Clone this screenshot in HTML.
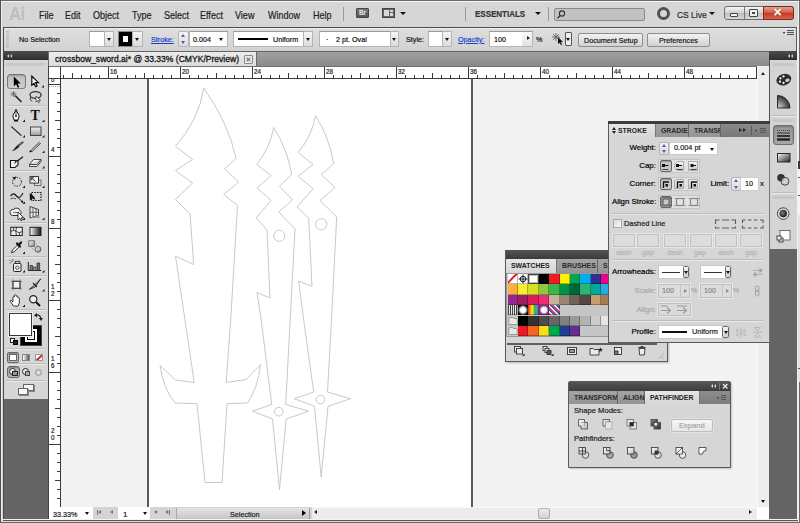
<!DOCTYPE html>
<html><head><meta charset="utf-8"><title>crossbow_sword.ai</title>
<style>
*{box-sizing:border-box;margin:0;padding:0}
html,body{width:800px;height:523px;overflow:hidden}
body{position:relative;background:#d6d6d6;font-family:"Liberation Sans","DejaVu Sans",sans-serif;font-size:8px;color:#1a1a1a;line-height:1}
.a{position:absolute}
.t{position:absolute;white-space:nowrap;transform-origin:0 50%;-webkit-text-stroke:.2px}
.menu .t{font-size:10.5px;top:8.500px;height:12px;line-height:12px;color:#222;transform:scaleX(.86)}
.ctl .t{font-size:8px;line-height:10px;height:10px;top:35px;color:#111;transform:scaleX(.9)}
.wf{position:absolute;background:#fff;border:1px solid #b4b4b4;border-top-color:#9a9a9a}
.dd{position:absolute;background:linear-gradient(#f4f4f4,#dcdcdc);border:1px solid #b4b4b4}
.ar{position:absolute;width:0;height:0;border-left:2.5px solid transparent;border-right:2.5px solid transparent;border-top:3px solid #111}
.arr{position:absolute;width:0;height:0;border-top:2.5px solid transparent;border-bottom:2.5px solid transparent;border-left:3px solid #222}
.arl{position:absolute;width:0;height:0;border-top:2.5px solid transparent;border-bottom:2.5px solid transparent;border-right:3px solid #222}
.ctl .link,.link{color:#1a3fd0;text-decoration:underline}
.btn{position:absolute;border:1px solid #8e8e8e;border-radius:2px;background:linear-gradient(#f2f2f2,#d2d2d2);text-align:center}
.hdr{position:absolute;background:linear-gradient(#4c4c4c,#2e2e2e)}
.grip{position:absolute;height:3px;background:repeating-linear-gradient(90deg,#c0c0c0 0 1px,#d0d0d0 1px 2px)}
.panel{position:absolute;background:#d6d6d6;border:1px solid #555}
.tabrow{position:absolute;left:0;right:0;background:linear-gradient(#8e8e8e,#7c7c7c)}
.tab{position:absolute;top:0;bottom:0;font-weight:bold;font-size:7.5px;color:#2a2a2a;border-right:1px solid #666;background:linear-gradient(#a4a4a4,#949494)}
.tab.on{background:linear-gradient(#e6e6e6,#d6d6d6);border-right:1px solid #777;color:#222}
.tab span{position:absolute;top:3px;white-space:nowrap;transform-origin:0 50%;transform:scaleX(.92)}
.pl{-webkit-text-stroke:.2px;position:absolute;font-size:8px;line-height:10px;white-space:nowrap;text-align:right;color:#000;transform-origin:100% 50%;transform:scaleX(.98)}
.dis{color:#a8a8a8}
.sep{position:absolute;height:2px;border-top:1px solid #bdbdbd;border-bottom:1px solid #e8e8e8}
</style></head><body>
<!-- window frame -->
<div class="a" style="left:0;top:0;width:800px;height:523px;border:1px solid #6a6a6a;border-left-color:#4e4e4e"></div>
<div class="a" style="left:1px;top:1px;width:798px;height:1px;background:#f4f4f4"></div>
<div class="a" style="left:1px;top:1px;width:1px;height:521px;background:#ededed"></div>
<div class="a" style="left:798px;top:1px;width:1px;height:521px;background:#f0f0f0"></div>

<!-- app bar -->
<div class="menu">
<div class="a" style="left:9px;top:5px;font-size:18px;line-height:18px;font-weight:bold;color:#bdbdbd;letter-spacing:-.5px;transform:scaleX(.92);transform-origin:0 0">Ai</div>
<div class="t" style="left:39px">File</div>
<div class="t" style="left:65px">Edit</div>
<div class="t" style="left:93px">Object</div>
<div class="t" style="left:132px">Type</div>
<div class="t" style="left:164px">Select</div>
<div class="t" style="left:200px">Effect</div>
<div class="t" style="left:235px">View</div>
<div class="t" style="left:268px">Window</div>
<div class="t" style="left:313px">Help</div>
</div>
<div class="a" style="left:343px;top:7px;width:1px;height:14px;background:#9a9a9a"></div>
<div class="a" style="left:356px;top:8px;width:13px;height:10px;background:linear-gradient(#7a7a7a,#555);border:1px solid #444;border-radius:1px;color:#e8e8e8;font-size:6.5px;line-height:8px;text-align:center;font-weight:bold">Br</div>
<div class="a" style="left:382px;top:8px;width:13px;height:10px;border:1px solid #444;background:#666"></div>
<div class="a" style="left:384px;top:10px;width:5px;height:6px;background:#d8d8d8"></div>
<div class="a" style="left:390px;top:10px;width:3px;height:2px;background:#d8d8d8"></div>
<div class="a" style="left:390px;top:13px;width:3px;height:3px;background:#d8d8d8"></div>
<div class="ar" style="left:400px;top:12px;border-left-width:3px;border-right-width:3px;border-top-width:3.500px"></div>
<div class="a" style="left:465px;top:7px;width:1px;height:14px;background:#9a9a9a"></div>
<div class="t" style="left:475px;top:8px;height:12px;line-height:12px;font-size:9.5px;font-weight:bold;color:#333;transform:scaleX(.84)">ESSENTIALS</div>
<div class="ar" style="left:535px;top:12px;border-left-width:3px;border-right-width:3px;border-top-width:3.500px"></div>
<div class="a" style="left:548px;top:7px;width:1px;height:14px;background:#9a9a9a"></div>
<div class="a" style="left:554px;top:8px;width:91px;height:13px;background:#c2c2c2;border:1px solid #8a8a8a;border-radius:2px"></div>
<svg class="a" style="left:556px;top:9px" width="11" height="11" viewBox="0 0 11 11"><circle cx="6" cy="4.5" r="2.6" fill="none" stroke="#333" stroke-width="1.1"/><path d="M4.2 6.4L1.5 9.2" stroke="#333" stroke-width="1.4"/></svg>
<div class="a" style="left:657px;top:7px;width:13px;height:13px;border-radius:50%;border:3px solid #505050"></div>
<div class="t" style="left:677px;top:8.500px;height:12px;line-height:12px;font-size:9px;color:#2a2a2a;transform:scaleX(.94)">CS Live</div>
<div class="ar" style="left:709px;top:12px;border-left-width:3px;border-right-width:3px;border-top-width:3.500px"></div>
<!-- window buttons -->
<div class="a" style="left:724px;top:6px;width:70px;height:14px;border:1px solid #6e6e6e;border-radius:3px;background:linear-gradient(#f6f6f6,#cfcfcf 50%,#bdbdbd 51%,#d8d8d8)"></div>
<div class="a" style="left:744px;top:7px;width:1px;height:12px;background:#777"></div>
<div class="a" style="left:763px;top:6px;width:31px;height:14px;border:1px solid #7a2a20;border-radius:0 3px 3px 0;background:linear-gradient(#e9a091,#d2553f 50%,#c03a22 51%,#d8654a)"></div>
<div class="a" style="left:730px;top:13px;width:8px;height:4px;border:1px solid #444;border-radius:1px;background:#f4f4f4"></div>
<div class="a" style="left:749px;top:9px;width:9px;height:8px;border:1px solid #444;border-radius:1px;background:#f0f0f0"></div>
<div class="a" style="left:752px;top:12px;width:3px;height:2px;border:1px solid #444"></div>
<div class="t" style="left:773px;top:6px;font-size:11px;line-height:13px;font-weight:bold;color:#fff;-webkit-text-stroke:.6px #fff;text-shadow:0 0 1.500px #500,0 0 1px #500">✕</div>

<!-- control bar -->
<div class="a" style="left:3px;top:27px;width:794px;height:25px;border:1px solid #4a4a4a;border-right-color:#5a5a5a;background:linear-gradient(#dedede,#d2d2d2)"></div>
<div class="a" style="left:4px;top:28px;width:792px;height:1px;background:#f0f0f0"></div>
<div class="a" style="left:6px;top:31px;width:3px;height:17px;background:repeating-linear-gradient(180deg,#bcbcbc 0 1px,#d2d2d2 1px 2px)"></div>
<div class="ctl">
<div class="t" style="left:19px">No Selection</div>
<div class="wf" style="left:89px;top:31px;width:16px;height:16px"></div>
<div class="dd" style="left:104px;top:31px;width:10px;height:16px"></div><div class="ar" style="left:107px;top:38px"></div>
<div class="a" style="left:118px;top:31px;width:15px;height:16px;background:#000;border:1px solid #888"></div>
<div class="a" style="left:123px;top:36px;width:5px;height:6px;background:#fff"></div>
<div class="dd" style="left:132px;top:31px;width:11px;height:16px"></div><div class="ar" style="left:135px;top:38px"></div>
<div class="t link" style="left:151px">Stroke:</div>
<div class="dd" style="left:178px;top:31px;width:11px;height:16px;border-radius:2px"></div>
<div class="a" style="left:181px;top:34px;border-left:2.5px solid transparent;border-right:2.5px solid transparent;border-bottom:3px solid #4a5fb0"></div>
<div class="a" style="left:181px;top:41px;border-left:2.5px solid transparent;border-right:2.5px solid transparent;border-top:3px solid #4a5fb0"></div>
<div class="wf" style="left:189px;top:31px;width:39px;height:16px"></div>
<div class="t" style="left:193px">0.004</div><div class="ar" style="left:219px;top:38px"></div>
<div class="wf" style="left:233px;top:31px;width:71px;height:16px"></div>
<div class="a" style="left:238px;top:38px;width:30px;height:2px;background:#000"></div>
<div class="t" style="left:273px">Uniform</div>
<div class="dd" style="left:303px;top:31px;width:10px;height:16px"></div><div class="ar" style="left:306px;top:38px"></div>
<div class="wf" style="left:319px;top:31px;width:72px;height:16px"></div>
<div class="t" style="left:326px">·</div>
<div class="t" style="left:336px">2 pt. Oval</div>
<div class="dd" style="left:390px;top:31px;width:9px;height:16px"></div><div class="ar" style="left:392px;top:38px"></div>
<div class="t" style="left:406px">Style:</div>
<div class="wf" style="left:428px;top:31px;width:15px;height:16px"></div>
<div class="dd" style="left:442px;top:31px;width:10px;height:16px"></div><div class="ar" style="left:445px;top:38px"></div>
<div class="t link" style="left:458px">Opacity:</div>
<div class="wf" style="left:489px;top:31px;width:44px;height:16px"></div>
<div class="t" style="left:494px">100</div>
<div class="a" style="left:522px;top:32px;width:10px;height:14px;background:linear-gradient(#fafafa,#e2e2e2)"></div>
<div class="arr" style="left:527px;top:36px"></div>
<div class="t" style="left:536px">%</div>
<svg class="a" style="left:551px;top:32px" width="14" height="14" viewBox="0 0 14 14"><g stroke="#555" stroke-width=".8"><path d="M5 1v8M1 5h8M2 2l6 6M8 2L2 8"/></g><path d="M7 5l5 5-2.2.2 1.2 2.6-1 .5-1.2-2.6L7 12z" fill="#111"/></svg>
<div class="a" style="left:565px;top:32px;width:7px;height:14px;border:1px solid #555;border-radius:1px;background:#eee"></div><div class="ar" style="left:566px;top:38px;border-left-width:2px;border-right-width:2px"></div>
<div class="btn" style="left:578px;top:33px;width:65px;height:14px"></div><div class="t" style="left:584px;top:35.500px">Document Setup</div>
<div class="btn" style="left:647px;top:33px;width:63px;height:14px"></div><div class="t" style="left:659px;top:35.500px">Preferences</div>
</div>
<div class="ar" style="left:783px;top:32px;border-left-width:1.5px;border-right-width:1.5px;border-top-width:2px"></div>
<div class="a" style="left:787px;top:30px;width:7px;height:5px;background:repeating-linear-gradient(180deg,#555 0 1px,#d6d6d6 1px 2px)"></div>

<!-- MAIN AREA -->
<div class="a" id="main" style="left:3px;top:51px;width:794px;height:469px;background:#646464;border-left:1px solid #4a4a4a"></div>
<!-- left toolbox -->
<div class="hdr" style="left:4px;top:51px;width:44px;height:9px"></div>
<div class="a" style="left:7px;top:54px;border-top:2px solid transparent;border-bottom:2px solid transparent;border-right:2.5px solid #d0d0d0"></div>
<div class="a" style="left:10px;top:54px;border-top:2px solid transparent;border-bottom:2px solid transparent;border-right:2.5px solid #d0d0d0"></div>
<div class="a" id="tb" style="left:4px;top:60px;width:44px;height:339px;background:#d6d6d6"></div>
<div class="grip" style="left:6px;top:63px;width:39px"></div>
<div class="a" style="left:7px;top:74px;width:19px;height:15px;border:1px solid #7a7a7a;border-radius:3px;background:linear-gradient(#bdbdbd,#cfcfcf);box-shadow:inset 0 1px 1px #999"></div>
<svg class="a" style="left:0;top:60px" width="50" height="340" viewBox="0 60 50 340">
<defs>
<linearGradient id="gH" x1="0" x2="1" y1="0" y2="0"><stop offset="0" stop-color="#fff"/><stop offset="1" stop-color="#111"/></linearGradient>
<linearGradient id="gV" x1="0" x2="0" y1="0" y2="1"><stop offset="0" stop-color="#f4f4f4"/><stop offset="1" stop-color="#9a9a9a"/></linearGradient>
<linearGradient id="gD" x1="0" x2="1" y1="0" y2="1"><stop offset="0" stop-color="#fff"/><stop offset="1" stop-color="#888"/></linearGradient>
</defs>
<g fill="#1a1a1a">
<!-- corner triangles -->
<path d="M24 87.500v-2.500l-2.500 2.500z" transform="translate(20 0)"/>
<path d="M25 122v-2.500l-2.500 2.500zM44.500 122v-2.500l-2.500 2.500zM25 137.500v-2.500l-2.500 2.500zM44.500 137.500v-2.500l-2.500 2.500zM44.500 153v-2.500l-2.500 2.500zM44.500 168.500v-2.500l-2.500 2.500zM25 188v-2.500l-2.500 2.500zM44.500 188v-2.500l-2.500 2.500zM25 204v-2.500l-2.500 2.500zM25 220v-2.500l-2.500 2.500zM44.500 220v-2.500l-2.500 2.500zM25 254v-2.500l-2.500 2.500zM25 272.500v-2.500l-2.500 2.500zM44.500 272.500v-2.500l-2.500 2.500zM44.500 291.500v-2.500l-2.500 2.500zM25 307v-2.500l-2.500 2.500z"/>
</g>
<!-- selection arrow -->
<path d="M13.800 76.500v9.800l2.300-2.100 1.700 3.500 1.500-.7-1.700-3.500h3.100z" fill="#000"/>
<!-- direct selection -->
<path d="M31.800 76v9.300l2.200-2 1.600 3.400 1.500-.7-1.600-3.400h3z" fill="#f0f0f0" stroke="#000" stroke-width="1.100"/>
<!-- magic wand -->
<path d="M15 95.500l6.500 6.500" stroke="#222" stroke-width="1.600"/>
<path d="M13.500 91v6M10.500 94h6M11.400 91.900l4.200 4.200M15.600 91.900l-4.200 4.200" stroke="#555" stroke-width=".7"/>
<!-- lasso -->
<ellipse cx="35.500" cy="95" rx="5.500" ry="3.400" fill="none" stroke="#333" stroke-width="1.300"/>
<path d="M31 97q-2 3 1 4.500" fill="none" stroke="#333" stroke-width="1"/>
<path d="M36 96v6l1.500-1.300 1 2 1-.5-1-2h2z" fill="#fff" stroke="#222" stroke-width=".7"/>
<!-- pen -->
<path d="M16 109.500l3.200 6.500-1.400 4h-3.600l-1.400-4z" fill="#fff" stroke="#111" stroke-width="1"/>
<path d="M16 110v5" stroke="#111" stroke-width=".8"/><circle cx="16" cy="116" r="1" fill="#111"/>
<rect x="14" y="120" width="4" height="1.500" fill="#111"/>
<!-- T -->
<text x="30.500" y="120.300" font-family="Liberation Serif,serif" font-weight="bold" font-size="14" fill="#111">T</text>
<!-- line -->
<path d="M11.400 126.700l10 9" stroke="#111" stroke-width="1.100"/>
<!-- rectangle -->
<rect x="30.500" y="127" width="10.500" height="8.500" fill="url(#gV)" stroke="#444" stroke-width="1"/>
<!-- brush -->
<path d="M22.700 142.300l-5.500 4.300" stroke="#555" stroke-width="2" stroke-linecap="round"/><path d="M18.200 145.200l1.200 1.500-2.400 2q-2.500 2.200-5.500 2.200q2.800-1.200 3.600-3.300z" fill="#222"/>
<!-- pencil -->
<path d="M39.300 142.500l-8 7.500-1.700 2 2.700-.8 8-7.600z" fill="#eee" stroke="#222" stroke-width=".9"/><path d="M29.500 152l2-.5-1.300-1.200z" fill="#111"/>
<!-- blob brush -->
<path d="M10.500 160.500h7.500v4.500l-3 2.500h-4.500z" fill="#f4f4f4" stroke="#111" stroke-width="1.100"/>
<path d="M23 156.800l-6 4.500" stroke="#222" stroke-width="1.400"/><path d="M17.500 160.500q-1 2.600-4 3.200q2-1.500 2-3.600z" fill="#222"/>
<!-- eraser -->
<path d="M33.500 159.500h7.500l-4 5h-7.500zM29.500 164.500v2h7.500l4-5v-2" fill="#f2f2f2" stroke="#333" stroke-width=".9" stroke-linejoin="round"/>
<!-- rotate -->
<circle cx="17" cy="181.800" r="4.400" fill="none" stroke="#222" stroke-width="1" stroke-dasharray="1.600 1.200"/>
<path d="M12.200 177.500l3.800-1-1 3.600z" fill="#111"/>
<!-- scale -->
<rect x="34.500" y="180" width="6.500" height="5.500" fill="#ddd" stroke="#555" stroke-width=".8"/>
<rect x="30" y="176.600" width="8.500" height="6.500" fill="#f6f6f6" stroke="#222" stroke-width=".9"/>
<path d="M31.500 178l4 3.500M31.300 177.800h2.500M31.300 177.800v2.500" stroke="#111" stroke-width=".9" fill="none"/>
<!-- width/warp -->
<path d="M10.500 196q3-4 6 0t6.500-3" fill="none" stroke="#333" stroke-width="1.300"/>
<path d="M10.500 199q3-2 5.500 0" fill="none" stroke="#555" stroke-width="1"/>
<path d="M14 193.500l8.500 8.500" stroke="#222" stroke-width="1"/><circle cx="22.300" cy="201.800" r="1.100" fill="#111"/>
<!-- free transform -->
<rect x="31.500" y="192.500" width="9.500" height="8" fill="none" stroke="#111" stroke-width="1.200" stroke-dasharray="1.500 1.200"/>
<path d="M29.800 193v7.500l2.300-2 3.200 1.200-1-3z" fill="#111"/>
<!-- shape builder -->
<path d="M10 212.500a3 2.800 0 0 1 3.500-3a3.500 2.800 0 0 1 6.500 1a2.800 2.800 0 0 1-1 5h-6.500a2.800 2.800 0 0 1-2.500-3z" fill="#f0f0f0" stroke="#333" stroke-width="1"/>
<path d="M13 212.500h6" stroke="#555" stroke-width=".8"/>
<path d="M18 212v8l2-1.700 1.200 2.500 1.200-.6-1.200-2.400h2.600z" fill="#fff" stroke="#111" stroke-width=".8"/>
<!-- perspective grid -->
<path d="M30 206.500l8.500 3v6l-8.500 2.500z" fill="#e8e8e8" stroke="#333" stroke-width=".9"/>
<path d="M33 207.500v9.600M36 208.600v7.600M30 212.300h8.500" stroke="#333" stroke-width=".7"/>
<path d="M38.500 215.500l-8.500 2.500h10z" fill="#999"/>
<!-- mesh -->
<rect x="10.800" y="227.300" width="11.500" height="8.200" fill="#eee" stroke="#222" stroke-width="1"/>
<path d="M10.800 231.500q3-2.500 5.700 0t5.800 0M16.500 227.300q-1.500 4 0 8.200M13.300 227.500q1 1.500 0 3M19.800 232q-1 2 0 3.500" fill="none" stroke="#222" stroke-width=".8"/>
<!-- gradient -->
<rect x="30" y="227.300" width="11" height="8.200" fill="url(#gH)" stroke="#222" stroke-width="1"/>
<!-- eyedropper -->
<path d="M11.300 252.800l1.200-2.800 5-5 1.800 1.800-5 5z" fill="#eee" stroke="#222" stroke-width=".9"/>
<path d="M17 243.500l3 3M18.600 245l2.400-2.600" stroke="#111" stroke-width="2.200" stroke-linecap="round"/>
<!-- blend -->
<rect x="28.800" y="240.800" width="5.500" height="5.500" fill="url(#gD)" stroke="#555" stroke-width=".8"/>
<circle cx="38" cy="249.300" r="2.900" fill="url(#gD)" stroke="#444" stroke-width=".8"/>
<path d="M33 245l3.500 3.500M35.500 243.500l3 3M31.500 247.500l3 3" stroke="#888" stroke-width=".6"/>
<!-- symbol sprayer -->
<rect x="13.500" y="263.500" width="7.500" height="8" rx="1" fill="#f0f0f0" stroke="#222" stroke-width="1"/>
<rect x="15.300" y="261.300" width="4.500" height="2.200" fill="#ccc" stroke="#222" stroke-width=".8"/>
<circle cx="17.300" cy="267.700" r="1.700" fill="none" stroke="#333" stroke-width=".8"/>
<path d="M9.500 260.500h1M11.500 261.500h1M9.800 262.800h1M12 260h1.500" stroke="#333" stroke-width=".9"/>
<!-- graph -->
<path d="M28.300 262v8.500h13" fill="none" stroke="#222" stroke-width="1"/>
<rect x="30" y="265.500" width="2.500" height="5" fill="#777" stroke="#222" stroke-width=".6"/><rect x="33.500" y="267" width="2.500" height="3.500" fill="#999" stroke="#222" stroke-width=".6"/><rect x="37" y="263" width="2.800" height="7.500" fill="#666" stroke="#222" stroke-width=".6"/>
<!-- artboard -->
<rect x="13" y="281.300" width="7" height="7" fill="#f4f4f4" stroke="#222" stroke-width="1"/>
<path d="M11 281.300h11M11 288.300h11M13 279.300v11M20 279.300v11" stroke="#555" stroke-width=".6"/>
<!-- slice -->
<path d="M40.800 278.800l-7 7-4.500 3.500 5.800-2.300z" fill="#ccc" stroke="#222" stroke-width=".9"/><path d="M33 283l4 4" stroke="#222" stroke-width="1.200"/>
<!-- hand -->
<path d="M13.500 306l-3-4.500q-.6-1.300.8-1.200l1.700 1.500v-5q.8-1.200 1.500 0v-1.500q.9-1.200 1.700 0v1q.9-1 1.600.2v1.300q.9-.8 1.500.3v5l-1.300 3z" fill="#fff" stroke="#222" stroke-width=".9" stroke-linejoin="round"/>
<!-- zoom -->
<circle cx="33.300" cy="299.300" r="3.600" fill="#eee" stroke="#222" stroke-width="1.200"/><path d="M36 302l4 4" stroke="#111" stroke-width="2"/>
</svg>

<div class="sep" style="left:6px;top:105px;width:40px"></div>
<div class="sep" style="left:6px;top:170px;width:40px"></div>
<div class="sep" style="left:6px;top:222px;width:40px"></div>
<div class="sep" style="left:6px;top:256px;width:40px"></div>
<div class="sep" style="left:6px;top:275px;width:40px"></div>
<div class="sep" style="left:6px;top:380px;width:40px"></div>
<!-- fill / stroke -->
<div class="sep" style="left:6px;top:309px;width:40px"></div>
<div class="sep" style="left:6px;top:348px;width:40px"></div>
<div class="sep" style="left:6px;top:363px;width:40px"></div>
<div class="a" style="left:20px;top:325px;width:22px;height:21px;background:#000;border:1px solid #444"></div>
<div class="a" style="left:25px;top:329px;width:12px;height:13px;background:#fff"></div>
<div class="a" style="left:27px;top:331px;width:8px;height:9px;background:#000"></div>
<div class="a" style="left:28px;top:332px;width:6px;height:7px;background:#ddd;border:1px solid #fff"></div>
<div class="a" style="left:9px;top:313px;width:23px;height:23px;background:#fff;border:1px solid #3a3a3a;box-shadow:0 0 0 1px #ececec"></div>
<div class="a" style="left:10px;top:338px;width:5px;height:5px;background:#fff;border:1px solid #222"></div>
<div class="a" style="left:13px;top:340px;width:5px;height:5px;background:#222;border:1px solid #000"></div>
<svg class="a" style="left:34px;top:313px" width="9" height="8" viewBox="0 0 9 8"><path d="M2 2Q6.500 1.500 7 6" fill="none" stroke="#222" stroke-width="1.200"/><path d="M0 2.200L3 0v4.500zM7 8L4.800 5h4.200z" fill="#222"/></svg>
<!-- color mode buttons -->
<div class="a" style="left:7px;top:352px;width:12px;height:11px;border:1px solid #666;border-radius:2px;background:#bdbdbd;box-shadow:inset 0 1px 1px #888"></div>
<div class="a" style="left:9px;top:354px;width:8px;height:7px;background:#fff;border:1px solid #666"></div>
<div class="a" style="left:22px;top:354px;width:8px;height:7px;background:linear-gradient(90deg,#fff,#555);border:1px solid #888"></div>
<div class="a" style="left:35px;top:354px;width:8px;height:7px;background:#fff;border:1px solid #999;overflow:hidden"><div class="a" style="left:-3px;top:2px;width:12px;height:1.600px;background:#e02020;transform:rotate(-42deg)"></div></div>
<!-- draw modes -->
<div class="a" style="left:7px;top:366px;width:13px;height:12px;border:1px solid #666;border-radius:3px;background:#b4b4b4;box-shadow:inset 0 1px 1px #888"></div>
<div class="a" style="left:9px;top:368px;width:7px;height:7px;border-radius:50%;border:1px solid #222;background:#eee"></div>
<div class="a" style="left:12px;top:371px;width:6px;height:5px;border:1px solid #222;background:#999"></div>
<div class="a" style="left:22px;top:368px;width:7px;height:7px;border-radius:50%;border:1px solid #222;background:#eee"></div>
<div class="a" style="left:25px;top:371px;width:5px;height:5px;border:1px solid #444;background:#aaa"></div>
<div class="a" style="left:35px;top:369px;width:7px;height:7px;border-radius:50%;border:1px solid #999;background:radial-gradient(#f4f4f4,#aaa)"></div>
<!-- screen mode -->
<div class="a" style="left:23px;top:384px;width:11px;height:7px;border:1px solid #666;background:#f6f6f6;box-shadow:1px 1px 0 #888"></div>
<div class="a" style="left:18px;top:388px;width:10px;height:7px;border:1px solid #666;background:#f6f6f6;box-shadow:1px 1px 0 #888"></div>
<div class="a" style="left:48px;top:52px;width:1px;height:467px;background:#444"></div>
<!-- document tab bar -->
<div class="a" style="left:48px;top:52px;width:721px;height:14px;background:linear-gradient(#a0a0a0,#8a8a8a)"></div>
<div class="a" style="left:48px;top:52px;width:209px;height:14px;background:linear-gradient(#ececec,#dcdcdc);border-left:1px solid #6a6a6a;border-right:1px solid #6a6a6a"></div>
<div class="t" style="left:55px;top:53px;height:12px;line-height:12px;font-size:9.5px;color:#111;-webkit-text-stroke:.3px #111;transform:scaleX(.9)">crossbow_sword.ai* @ 33.33% (CMYK/Preview)</div>
<div class="a" style="left:244px;top:55px;width:9px;height:9px;border:1px solid #8a8a8a;border-radius:1px;background:#e8e8e8;font-size:7px;line-height:7px;text-align:center;color:#444">✕</div>
<!-- canvas -->
<div class="a" style="left:49px;top:66px;width:720px;height:453px;background:#f3f3f3"></div>
<div class="a" style="left:149px;top:78px;width:322px;height:430px;background:#fff"></div>
<div class="a" style="left:147px;top:78px;width:2px;height:430px;background:#5a5a5a"></div>
<div class="a" style="left:471px;top:78px;width:2px;height:430px;background:#5a5a5a"></div>
<svg class="a" style="left:0;top:0" width="800" height="523" viewBox="0 0 800 523" fill="none" stroke="#c2c2c2" stroke-width="0.9" stroke-linejoin="miter">
<!-- sword 1 -->
<path d="M203.7 88 Q199 120 175.5 146.2 L192.5 159.5 L175.5 170.5 L192.5 183 L175.5 199.5 L190 213.8 L193.7 264.5 L175.5 256.2 L185 320 L194.2 382.5 L175.5 380 L160 365.5 Q163 388 175 403 L197 403.7 L205 482.5 L222 482.5 L227 403.7 L247.5 403 Q258 388 260.5 364.5 L246.2 379.5 L226.2 382.5 L230.7 320 L237.5 205.5 L223.7 194.5 L238.7 182 L224.5 168.7 L236.2 158.7 Q228 122 203.7 88Z"/>
<!-- sword 2 -->
<path d="M273.7 127.5 Q270 148 256.7 164.5 L271.2 175.7 L257 188 L271.2 200.3 L256.2 218 L267 230 L270 298 L257 292.5 L261.2 320 L271.7 404.5 L252.5 411.2 L272.5 419 L279.5 489.5 L286.2 419 L308.7 411.2 L285.7 404.5 L290.7 310 L295 228.7 L278.7 212 L292.5 200 L279.5 186.2 L291.7 174.5 Q287 148 273.7 127.5Z"/>
<circle cx="279.3" cy="235.8" r="5.6"/>
<circle cx="278.8" cy="411.7" r="4.3"/>
<!-- sword 3 -->
<path d="M315.5 115.8 Q312 136 298.2 152.5 L313 164.5 L298.2 176.2 L313 188.7 L297 207 L308.7 218 L312 286.2 L298.7 281.2 L303.7 320 L313.7 392 L294.2 398.7 L314.5 406.2 L321.2 477 L328 406.2 L350.5 398.7 L327.5 392 L332 310 L336.7 217 L320 200.5 L335 187.5 L321.2 174.5 L333.7 163.7 Q329 136 315.5 115.8Z"/>
<circle cx="321.3" cy="224.3" r="5.6"/>
<circle cx="320.5" cy="399.5" r="4.3"/>
</svg>

<!-- rulers -->
<div class="a" style="left:49px;top:66px;width:708px;height:13px;background:#fff;border-bottom:1px solid #3a3a3a"></div>
<div class="a" style="left:49px;top:79px;width:12px;height:428px;background:#fff;border-right:1px solid #3a3a3a"></div>
<div class="a" style="left:60px;top:66px;width:1px;height:13px;background:#3a3a3a"></div>
<div class="a" style="left:61px;top:75px;width:696px;height:3px;background:repeating-linear-gradient(90deg,transparent 0 2px,#3a3a3a 2px 3px,transparent 3px 9px)"></div>
<div class="a" style="left:57px;top:79px;width:3px;height:428px;background:repeating-linear-gradient(180deg,transparent 0 5px,#3a3a3a 5px 6px,transparent 6px 9px)"></div>
<div class="a" style="left:108px;top:66px;width:1px;height:12px;background:#3a3a3a"></div>
<div class="t" style="left:110px;top:67.5px;font-size:7px;line-height:8px;color:#222;transform:scaleX(.9)">16</div>
<div class="a" style="left:180px;top:66px;width:1px;height:12px;background:#3a3a3a"></div>
<div class="t" style="left:182px;top:67.5px;font-size:7px;line-height:8px;color:#222;transform:scaleX(.9)">20</div>
<div class="a" style="left:252px;top:66px;width:1px;height:12px;background:#3a3a3a"></div>
<div class="t" style="left:254px;top:67.5px;font-size:7px;line-height:8px;color:#222;transform:scaleX(.9)">24</div>
<div class="a" style="left:324px;top:66px;width:1px;height:12px;background:#3a3a3a"></div>
<div class="t" style="left:326px;top:67.5px;font-size:7px;line-height:8px;color:#222;transform:scaleX(.9)">28</div>
<div class="a" style="left:396px;top:66px;width:1px;height:12px;background:#3a3a3a"></div>
<div class="t" style="left:398px;top:67.5px;font-size:7px;line-height:8px;color:#222;transform:scaleX(.9)">32</div>
<div class="a" style="left:468px;top:66px;width:1px;height:12px;background:#3a3a3a"></div>
<div class="t" style="left:470px;top:67.5px;font-size:7px;line-height:8px;color:#222;transform:scaleX(.9)">36</div>
<div class="a" style="left:540px;top:66px;width:1px;height:12px;background:#3a3a3a"></div>
<div class="t" style="left:542px;top:67.5px;font-size:7px;line-height:8px;color:#222;transform:scaleX(.9)">40</div>
<div class="a" style="left:612px;top:66px;width:1px;height:12px;background:#3a3a3a"></div>
<div class="t" style="left:614px;top:67.5px;font-size:7px;line-height:8px;color:#222;transform:scaleX(.9)">44</div>
<div class="a" style="left:684px;top:66px;width:1px;height:12px;background:#3a3a3a"></div>
<div class="t" style="left:686px;top:67.5px;font-size:7px;line-height:8px;color:#222;transform:scaleX(.9)">48</div>
<div class="a" style="left:49px;top:84px;width:11px;height:1px;background:#3a3a3a"></div><div class="a" style="left:49px;top:86px;width:11px;height:1px;background:repeating-linear-gradient(90deg,#aaa 0 1px,#fff 1px 2px)"></div>
<div class="t" style="left:50.5px;top:75.500px;font-size:7px;line-height:8px;color:#222;transform:scaleX(.9)">0</div>
<div class="a" style="left:49px;top:156px;width:11px;height:1px;background:#3a3a3a"></div>
<div class="t" style="left:50.5px;top:146px;font-size:7px;line-height:8px;color:#222;transform:scaleX(.9)">4</div>
<div class="a" style="left:49px;top:228px;width:11px;height:1px;background:#3a3a3a"></div>
<div class="t" style="left:50.5px;top:218px;font-size:7px;line-height:8px;color:#222;transform:scaleX(.9)">8</div>
<div class="a" style="left:49px;top:300px;width:11px;height:1px;background:#3a3a3a"></div>
<div class="t" style="left:50.5px;top:283px;font-size:7px;line-height:8px;color:#222;transform:scaleX(.9)">1</div>
<div class="t" style="left:50.5px;top:290px;font-size:7px;line-height:8px;color:#222;transform:scaleX(.9)">2</div>
<div class="a" style="left:49px;top:372px;width:11px;height:1px;background:#3a3a3a"></div>
<div class="t" style="left:50.5px;top:355px;font-size:7px;line-height:8px;color:#222;transform:scaleX(.9)">1</div>
<div class="t" style="left:50.5px;top:362px;font-size:7px;line-height:8px;color:#222;transform:scaleX(.9)">6</div>
<div class="a" style="left:49px;top:444px;width:11px;height:1px;background:#3a3a3a"></div>
<div class="t" style="left:50.5px;top:427px;font-size:7px;line-height:8px;color:#222;transform:scaleX(.9)">2</div>
<div class="t" style="left:50.5px;top:434px;font-size:7px;line-height:8px;color:#222;transform:scaleX(.9)">0</div>
<div class="a" style="left:61px;top:73px;width:696px;height:5px;background:repeating-linear-gradient(90deg,transparent 0 11px,#3a3a3a 11px 12px,transparent 12px 72px)"></div>
<div class="a" style="left:55px;top:79px;width:5px;height:428px;background:repeating-linear-gradient(180deg,transparent 0 41px,#3a3a3a 41px 42px,transparent 42px 72px)"></div>
<div class="a" style="left:756px;top:66px;width:1px;height:13px;background:#3a3a3a"></div>
<div class="a" style="left:49px;top:66px;width:11px;height:12px;background:#fff"></div><div class="a" style="left:49px;top:78px;width:12px;height:1px;background:#3a3a3a"></div>
<div class="a" style="left:49px;top:66px;width:708px;height:1px;background:#707070"></div>
<!-- scrollbars -->
<div class="a" style="left:757px;top:66px;width:12px;height:441px;background:#ededed;border-left:1px solid #f8f8f8"></div>
<div class="a" style="left:761px;top:72px;border-left:2.5px solid transparent;border-right:2.5px solid transparent;border-bottom:3px solid #222"></div>
<div class="ar" style="left:761px;top:500px"></div>
<div class="a" style="left:757px;top:507px;width:12px;height:12px;background:#fff"></div>
<!-- status bar -->
<div class="a" style="left:49px;top:507px;width:708px;height:12px;background:#ececec;border-top:1px solid #f8f8f8"></div>
<div class="a" style="left:49px;top:507px;width:263px;height:12px;background:#d4d4d4"></div>
<div class="a" style="left:49px;top:507px;width:44px;height:12px;background:#fff"></div>
<div class="t" style="left:53px;top:509.500px;font-size:8px;line-height:10px;transform:scaleX(.9)">33.33%</div>
<div class="ar" style="left:85px;top:512px"></div>
<div class="a" style="left:118px;top:507px;width:32px;height:12px;background:#fff"></div>
<div class="t" style="left:123px;top:509.500px;font-size:8px;line-height:10px">1</div>
<div class="ar" style="left:143px;top:512px"></div>
<div class="a" style="left:97px;top:510px;width:1px;height:5px;background:#777"></div><div class="arl" style="left:98px;top:510px;border-right-color:#777"></div>
<div class="arl" style="left:110px;top:510px;border-right-color:#777"></div>
<div class="arr" style="left:155px;top:510px;border-left-color:#777"></div>
<div class="arr" style="left:166px;top:510px;border-left-color:#777"></div><div class="a" style="left:169px;top:510px;width:1px;height:5px;background:#777"></div>
<div class="a" style="left:176px;top:508px;width:134px;height:11px;background:linear-gradient(#e4e4e4,#c6c6c6);border-left:1px solid #aaa;border-right:1px solid #999"></div>
<div class="t" style="left:230px;top:509.500px;font-size:8px;line-height:10px;transform:scaleX(.9)">Selection</div>
<div class="arr" style="left:302px;top:510px;border-left-width:4px;border-top-width:3px;border-bottom-width:3px;border-left-color:#000"></div>
<div class="arl" style="left:314px;top:510px"></div>
<div class="arr" style="left:749px;top:510px"></div>
<div class="a" style="left:538px;top:508px;width:12px;height:11px;border:1px solid #b0b0b0;border-radius:2px;background:linear-gradient(#ececec,#d2d2d2)"></div>

<!-- right dock -->
<div class="hdr" style="left:769px;top:51px;width:28px;height:9px"></div>
<div class="a" style="left:788px;top:54px;border-top:2px solid transparent;border-bottom:2px solid transparent;border-right:2.5px solid #d0d0d0"></div>
<div class="a" style="left:791px;top:54px;border-top:2px solid transparent;border-bottom:2px solid transparent;border-right:2.5px solid #d0d0d0"></div>
<div class="a" style="left:769px;top:60px;width:28px;height:189px;background:#d4d4d4;border-left:1px solid #505050"></div>
<div class="grip" style="left:773px;top:63px;width:21px"></div>
<div class="sep" style="left:771px;top:115px;width:25px"></div>
<div class="grip" style="left:773px;top:119px;width:21px"></div>
<div class="sep" style="left:771px;top:192px;width:25px"></div>
<div class="grip" style="left:773px;top:196px;width:21px"></div>
<div class="a" style="left:773px;top:125px;width:21px;height:20px;border:1px solid #6e6e6e;border-radius:3px;background:linear-gradient(#989898,#a8a8a8);box-shadow:inset 0 1px 2px #777"></div>
<svg class="a" style="left:770px;top:60px" width="28" height="190" viewBox="770 60 28 190">
<defs>
<linearGradient id="dg1" x1="0" x2="1" y1="0" y2="1"><stop offset="0" stop-color="#fff"/><stop offset="1" stop-color="#222"/></linearGradient>
<radialGradient id="dg2" cx=".4" cy=".4" r=".6"><stop offset="0" stop-color="#777"/><stop offset="1" stop-color="#222"/></radialGradient>
<radialGradient id="dg3" cx="0" cy="1" r="1"><stop offset="0" stop-color="#ddd"/><stop offset="1" stop-color="#333"/></radialGradient>
</defs>
<!-- palette -->
<g transform="rotate(-18 783.300 79.500)"><ellipse cx="783.800" cy="79.800" rx="7.600" ry="5.600" fill="#2a2a2a"/><ellipse cx="787" cy="81.500" rx="2.200" ry="1.500" fill="#d4d4d4"/>
<circle cx="779.500" cy="80.500" r="1.100" fill="#fff"/><circle cx="781" cy="77.500" r="1.100" fill="#fff"/><circle cx="784.500" cy="76.600" r="1.100" fill="#fff"/><circle cx="782.500" cy="82.800" r="1.100" fill="#fff"/></g>
<!-- color guide -->
<path d="M777.500 95.500v12.500h12.500a12.500 12.500 0 0 0-12.500-12.500z" fill="url(#dg3)" stroke="#2a2a2a" stroke-width="1"/>
<!-- stroke icon -->
<path d="M777 130.500h13" stroke="#444" stroke-width="1" stroke-dasharray="1 1"/>
<path d="M777 133h13" stroke="#333" stroke-width="1"/>
<path d="M777 136h13" stroke="#2a2a2a" stroke-width="1.800"/>
<path d="M777 139.500h13" stroke="#222" stroke-width="2.400"/>
<!-- gradient -->
<rect x="777.500" y="153.500" width="12.500" height="8.500" fill="url(#dg1)" stroke="#2a2a2a" stroke-width="1"/>
<!-- transparency -->
<circle cx="781" cy="177.700" r="3.800" fill="#333"/>
<circle cx="785" cy="181.300" r="3.900" fill="#d0d0d0" fill-opacity=".75" stroke="#333" stroke-width=".9"/>
<!-- appearance -->
<circle cx="783.200" cy="213.600" r="5.800" fill="#e4e4e4" stroke="#444" stroke-width="1"/>
<circle cx="783.200" cy="213.600" r="3.800" fill="url(#dg2)"/>
<!-- graphic styles -->
<rect x="780" y="230.500" width="10" height="9.500" fill="#fafafa" stroke="#555" stroke-width=".8"/>
<rect x="779" y="238" width="4" height="4" fill="#eee" stroke="#222" stroke-width=".8"/>
<rect x="777" y="236" width="4" height="4" fill="#eee" stroke="#222" stroke-width=".8"/>
</svg>
<div class="a" style="left:797px;top:161px;width:3px;height:8px;background:#3a3a3a"></div>
<div class="a" style="left:797px;top:169px;width:3px;height:46px;background:#f4f4f4"></div>
<div class="a" style="left:797px;top:215px;width:3px;height:167px;background:#e2e2e2"></div><div class="a" style="left:797px;top:177px;width:3px;height:1px;background:#555"></div><div class="a" style="left:797px;top:195px;width:3px;height:1px;background:#555"></div><div class="a" style="left:797px;top:368px;width:3px;height:1px;background:#555"></div>


<!-- SWATCHES panel -->
<div class="a" style="left:505px;top:250px;width:163px;height:112px;background:#d6d6d6;border:1px solid #5a5a5a;box-shadow:1px 1px 2px rgba(0,0,0,.25)"></div>
<div class="hdr" style="left:506px;top:250px;width:161px;height:9px;background:linear-gradient(#555,#3a3a3a)"></div>
<div class="a" style="left:506px;top:259px;width:161px;height:14px;background:linear-gradient(#8e8e8e,#7c7c7c)">
 <div class="tab on" style="left:0;width:51px"><span style="left:5px">SWATCHES</span></div>
 <div class="tab" style="left:51px;width:41px"><span style="left:5px">BRUSHES</span></div>
 <div class="tab" style="left:92px;width:30px"><span style="left:5px">SYMBOLS</span></div>
</div>
<div class="a" style="left:506px;top:273px;width:161px;height:64px;background:#c6c6c6;border:1px solid #999"></div>
<div class="a" style="left:507.6px;top:273.9px;width:10.4px;height:10.4px;background:#fff;overflow:hidden;box-shadow:inset -1px -1px 0 rgba(0,0,0,.28);"><div class="a" style="left:-3px;top:3.600px;width:15px;height:1.600px;background:#e02020;transform:rotate(-45deg)"></div></div>
<div class="a" style="left:518.0px;top:273.9px;width:10.4px;height:10.4px;background:#fff;box-shadow:inset -1px -1px 0 rgba(0,0,0,.28);"></div><svg class="a" style="left:518.0px;top:273.9px" width="10" height="10" viewBox="0 0 10 10"><circle cx="5" cy="5" r="2.800" fill="none" stroke="#111" stroke-width="1"/><path d="M5 .5v9M.5 5h9" stroke="#111" stroke-width=".9"/></svg>
<div class="a" style="left:528.4px;top:273.9px;width:10.4px;height:10.4px;background:#fff;border:1px solid #444;box-shadow:inset 0 0 0 1px #bbb"></div>
<div class="a" style="left:538.8px;top:273.9px;width:10.4px;height:10.4px;background:#000000;box-shadow:inset -1px -1px 0 rgba(0,0,0,.28);"></div>
<div class="a" style="left:549.2px;top:273.9px;width:10.4px;height:10.4px;background:#ed1c24;box-shadow:inset -1px -1px 0 rgba(0,0,0,.28);"></div>
<div class="a" style="left:559.6px;top:273.9px;width:10.4px;height:10.4px;background:#fff200;box-shadow:inset -1px -1px 0 rgba(0,0,0,.28);"></div>
<div class="a" style="left:570.0px;top:273.9px;width:10.4px;height:10.4px;background:#00a651;box-shadow:inset -1px -1px 0 rgba(0,0,0,.28);"></div>
<div class="a" style="left:580.4px;top:273.9px;width:10.4px;height:10.4px;background:#00aeef;box-shadow:inset -1px -1px 0 rgba(0,0,0,.28);"></div>
<div class="a" style="left:590.8px;top:273.9px;width:10.4px;height:10.4px;background:#2e3192;box-shadow:inset -1px -1px 0 rgba(0,0,0,.28);"></div>
<div class="a" style="left:601.2px;top:273.9px;width:10.4px;height:10.4px;background:#ec008c;box-shadow:inset -1px -1px 0 rgba(0,0,0,.28);"></div>
<div class="a" style="left:507.6px;top:284.3px;width:10.4px;height:10.4px;background:#fbb040;box-shadow:inset -1px -1px 0 rgba(0,0,0,.28);"></div>
<div class="a" style="left:518.0px;top:284.3px;width:10.4px;height:10.4px;background:#f9ed32;box-shadow:inset -1px -1px 0 rgba(0,0,0,.28);"></div>
<div class="a" style="left:528.4px;top:284.3px;width:10.4px;height:10.4px;background:#d7df23;box-shadow:inset -1px -1px 0 rgba(0,0,0,.28);"></div>
<div class="a" style="left:538.8px;top:284.3px;width:10.4px;height:10.4px;background:#8dc63f;box-shadow:inset -1px -1px 0 rgba(0,0,0,.28);"></div>
<div class="a" style="left:549.2px;top:284.3px;width:10.4px;height:10.4px;background:#39b54a;box-shadow:inset -1px -1px 0 rgba(0,0,0,.28);"></div>
<div class="a" style="left:559.6px;top:284.3px;width:10.4px;height:10.4px;background:#009444;box-shadow:inset -1px -1px 0 rgba(0,0,0,.28);"></div>
<div class="a" style="left:570.0px;top:284.3px;width:10.4px;height:10.4px;background:#006838;box-shadow:inset -1px -1px 0 rgba(0,0,0,.28);"></div>
<div class="a" style="left:580.4px;top:284.3px;width:10.4px;height:10.4px;background:#2bb673;box-shadow:inset -1px -1px 0 rgba(0,0,0,.28);"></div>
<div class="a" style="left:590.8px;top:284.3px;width:10.4px;height:10.4px;background:#00a79d;box-shadow:inset -1px -1px 0 rgba(0,0,0,.28);"></div>
<div class="a" style="left:601.2px;top:284.3px;width:10.4px;height:10.4px;background:#27aae1;box-shadow:inset -1px -1px 0 rgba(0,0,0,.28);"></div>
<div class="a" style="left:507.6px;top:294.7px;width:10.4px;height:10.4px;background:#92278f;box-shadow:inset -1px -1px 0 rgba(0,0,0,.28);"></div>
<div class="a" style="left:518.0px;top:294.7px;width:10.4px;height:10.4px;background:#9e1f63;box-shadow:inset -1px -1px 0 rgba(0,0,0,.28);"></div>
<div class="a" style="left:528.4px;top:294.7px;width:10.4px;height:10.4px;background:#da1c5c;box-shadow:inset -1px -1px 0 rgba(0,0,0,.28);"></div>
<div class="a" style="left:538.8px;top:294.7px;width:10.4px;height:10.4px;background:#ee2a7b;box-shadow:inset -1px -1px 0 rgba(0,0,0,.28);"></div>
<div class="a" style="left:549.2px;top:294.7px;width:10.4px;height:10.4px;background:#c7b299;box-shadow:inset -1px -1px 0 rgba(0,0,0,.28);"></div>
<div class="a" style="left:559.6px;top:294.7px;width:10.4px;height:10.4px;background:#998675;box-shadow:inset -1px -1px 0 rgba(0,0,0,.28);"></div>
<div class="a" style="left:570.0px;top:294.7px;width:10.4px;height:10.4px;background:#736357;box-shadow:inset -1px -1px 0 rgba(0,0,0,.28);"></div>
<div class="a" style="left:580.4px;top:294.7px;width:10.4px;height:10.4px;background:#534741;box-shadow:inset -1px -1px 0 rgba(0,0,0,.28);"></div>
<div class="a" style="left:590.8px;top:294.7px;width:10.4px;height:10.4px;background:#c69c6d;box-shadow:inset -1px -1px 0 rgba(0,0,0,.28);"></div>
<div class="a" style="left:601.2px;top:294.7px;width:10.4px;height:10.4px;background:#a67c52;box-shadow:inset -1px -1px 0 rgba(0,0,0,.28);"></div>
<div class="a" style="left:507.6px;top:305.1px;width:10.4px;height:10.4px;background:repeating-linear-gradient(90deg,#444 0 1px,#e4e4e4 1px 2px);box-shadow:inset -1px -1px 0 rgba(0,0,0,.28);"></div>
<div class="a" style="left:518.0px;top:305.1px;width:10.4px;height:10.4px;background:radial-gradient(#fff 35%,#000 75%)"></div>
<div class="a" style="left:528.4px;top:305.1px;width:10.4px;height:10.4px;background:linear-gradient(90deg,#e31b23,#f7941d,#fff200,#39b54a,#27aae1,#e31b23);box-shadow:inset -1px -1px 0 rgba(0,0,0,.28);"></div>
<div class="a" style="left:538.8px;top:305.1px;width:10.4px;height:10.4px;background:radial-gradient(#fff 35%,#7b2d90 65%);box-shadow:inset -1px -1px 0 rgba(0,0,0,.28);"></div>
<div class="a" style="left:549.2px;top:305.1px;width:10.4px;height:10.4px;background:repeating-linear-gradient(45deg,#e8465a 0 1.500px,#f4e4ee 1.500px 3px,#3f55b5 3px 4.500px);box-shadow:inset -1px -1px 0 rgba(0,0,0,.28);"></div>
<svg class="a" style="left:507.6px;top:315.5px" width="10" height="10" viewBox="0 0 10 10"><path d="M.8 3q0-1.500 1.500-1.500h2l1 1h3q1 0 1 1v5h-8.500z" fill="#e8e8e8" stroke="#888" stroke-width=".8"/></svg>
<div class="a" style="left:518.0px;top:315.5px;width:10.4px;height:10.4px;background:#000000;box-shadow:inset -1px -1px 0 rgba(0,0,0,.28);"></div>
<div class="a" style="left:528.4px;top:315.5px;width:10.4px;height:10.4px;background:#333333;box-shadow:inset -1px -1px 0 rgba(0,0,0,.28);"></div>
<div class="a" style="left:538.8px;top:315.5px;width:10.4px;height:10.4px;background:#4d4d4d;box-shadow:inset -1px -1px 0 rgba(0,0,0,.28);"></div>
<div class="a" style="left:549.2px;top:315.5px;width:10.4px;height:10.4px;background:#666666;box-shadow:inset -1px -1px 0 rgba(0,0,0,.28);"></div>
<div class="a" style="left:559.6px;top:315.5px;width:10.4px;height:10.4px;background:#808080;box-shadow:inset -1px -1px 0 rgba(0,0,0,.28);"></div>
<div class="a" style="left:570.0px;top:315.5px;width:10.4px;height:10.4px;background:#999999;box-shadow:inset -1px -1px 0 rgba(0,0,0,.28);"></div>
<div class="a" style="left:580.4px;top:315.5px;width:10.4px;height:10.4px;background:#b3b3b3;box-shadow:inset -1px -1px 0 rgba(0,0,0,.28);"></div>
<div class="a" style="left:590.8px;top:315.5px;width:10.4px;height:10.4px;background:#cccccc;box-shadow:inset -1px -1px 0 rgba(0,0,0,.28);"></div>
<div class="a" style="left:601.2px;top:315.5px;width:10.4px;height:10.4px;background:#e6e6e6;box-shadow:inset -1px -1px 0 rgba(0,0,0,.28);"></div>
<svg class="a" style="left:507.6px;top:325.9px" width="10" height="10" viewBox="0 0 10 10"><path d="M.8 3q0-1.500 1.500-1.500h2l1 1h3q1 0 1 1v5h-8.500z" fill="#e8e8e8" stroke="#888" stroke-width=".8"/></svg>
<div class="a" style="left:518.0px;top:325.9px;width:10.4px;height:10.4px;background:#ed1c24;box-shadow:inset -1px -1px 0 rgba(0,0,0,.28);"></div>
<div class="a" style="left:528.4px;top:325.9px;width:10.4px;height:10.4px;background:#f26522;box-shadow:inset -1px -1px 0 rgba(0,0,0,.28);"></div>
<div class="a" style="left:538.8px;top:325.9px;width:10.4px;height:10.4px;background:#ffde17;box-shadow:inset -1px -1px 0 rgba(0,0,0,.28);"></div>
<div class="a" style="left:549.2px;top:325.9px;width:10.4px;height:10.4px;background:#00a651;box-shadow:inset -1px -1px 0 rgba(0,0,0,.28);"></div>
<div class="a" style="left:559.6px;top:325.9px;width:10.4px;height:10.4px;background:#1c3f94;box-shadow:inset -1px -1px 0 rgba(0,0,0,.28);"></div>
<div class="a" style="left:570.0px;top:325.9px;width:10.4px;height:10.4px;background:#662d91;box-shadow:inset -1px -1px 0 rgba(0,0,0,.28);"></div>
<div class="a" style="left:507px;top:343px;width:150px;height:1.500px;background:#5e5e5e"></div>
<svg class="a" style="left:506px;top:344px" width="161" height="16" viewBox="506 344 161 16">
<g fill="#ececec" stroke="#333" stroke-width=".9">
<rect x="514.500" y="346.500" width="6" height="5.500"/><rect x="516.500" y="348.500" width="6" height="5.500"/>
<rect x="543" y="346.500" width="4" height="4"/><rect x="545" y="348.500" width="4" height="4"/><rect x="547" y="350.500" width="4" height="4" fill="#555"/>
<rect x="567.500" y="347.500" width="9" height="7"/><rect x="569.500" y="349.500" width="5" height="3" fill="#999"/>
<path d="M590 348.500h3l1 1h5v5.500h-9z"/>
<rect x="614.500" y="347.500" width="7" height="7"/><rect x="614.500" y="351" width="3.500" height="3.500" fill="#777"/>
<path d="M639 348.500h6l-.7 6.500h-4.600zM638.300 347.500h7.400M640.500 346.500h3"/>
</g>
<g fill="#222"><path d="M524.500 356v-2.500l-2.500 2.500zM553.500 356v-2.500l-2.500 2.500zM600.500 347.500l.8 1.500 1.500.3-1.200 1 .4 1.500-1.500-.8-1.500.8.400-1.500-1.200-1 1.500-.3z"/></g>
<path d="M664 353l-6 6M664 355.500l-3.500 3.500M664 358l-1 1" stroke="#aaa" stroke-width=".8"/>
</svg>
<!-- STROKE panel -->
<div class="a" style="left:608px;top:121px;width:162px;height:222px;background:#d6d6d6;border:1px solid #5a5a5a;border-right-color:#777"></div>
<div class="hdr" style="left:608px;top:121px;width:162px;height:3px;background:#3c3c3c"></div>
<div class="a" style="left:609px;top:124px;width:160px;height:13px;background:linear-gradient(#8a8a8a,#787878)">
 <div class="tab on" style="left:0;width:47px"><span style="left:9px">STROKE</span></div>
 <div class="tab" style="left:47px;width:33px;overflow:hidden"><span style="left:5px">GRADIENT</span></div>
 <div class="tab" style="left:80px;width:32px;overflow:hidden"><span style="left:5px">TRANSPARENCY</span></div>
</div>
<div class="a" style="left:611.500px;top:126.500px;border-left:2.200px solid transparent;border-right:2.200px solid transparent;border-bottom:3px solid #222"></div>
<div class="a" style="left:611.500px;top:131px;border-left:2.200px solid transparent;border-right:2.200px solid transparent;border-top:3px solid #222"></div>
<div class="arr" style="left:739px;top:128px;border-left-color:#222"></div><div class="arr" style="left:742.500px;top:128px;border-left-color:#222"></div>
<div class="a" style="left:751px;top:126px;width:1px;height:9px;background:#5a5a5a"></div>
<div class="ar" style="left:755px;top:130px;border-left-width:1.800px;border-right-width:1.800px;border-top-width:2.500px;border-top-color:#333"></div>
<div class="a" style="left:760px;top:128px;width:6px;height:5px;background:repeating-linear-gradient(180deg,#555 0 1px,transparent 1px 2px)"></div>
<!-- weight -->
<div class="pl" style="right:144px;top:143px">Weight:</div>
<div class="dd" style="left:659px;top:142px;width:10px;height:13px;border-radius:2px"></div>
<div class="a" style="left:661.500px;top:144px;border-left:2.500px solid transparent;border-right:2.500px solid transparent;border-bottom:3px solid #4a5fb0"></div>
<div class="a" style="left:661.500px;top:150px;border-left:2.500px solid transparent;border-right:2.500px solid transparent;border-top:3px solid #4a5fb0"></div>
<div class="wf" style="left:669px;top:142px;width:49px;height:13px;border-color:#ccc"></div>
<div class="t" style="left:674px;top:143px;font-size:8px;line-height:10px;transform:scaleX(.92)">0.004 pt</div>
<div class="ar" style="left:710px;top:148px"></div>
<!-- cap -->
<div class="pl" style="right:144px;top:161px">Cap:</div>
<div class="a" style="left:658px;top:159px;width:42px;height:14px;background:#e2e2e2;border:1px solid #c4c4c4"></div>
<div class="a" style="left:660px;top:160px;width:12px;height:12px;border:1px solid #666;border-radius:2px;background:#c8c8c8;box-shadow:inset 0 1px 1px #999"></div>
<div class="a" style="left:674px;top:161px;width:10px;height:10px;border-radius:5px 0 0 5px;background:linear-gradient(#f4f4f4,#ccc);border:1px solid #aaa"></div>
<div class="a" style="left:688px;top:161px;width:10px;height:10px;background:linear-gradient(#f4f4f4,#ccc);border:1px solid #aaa"></div>
<svg class="a" style="left:658px;top:159px" width="42" height="14" viewBox="0 0 42 14"><g stroke="#111" stroke-width="1.200"><path d="M5.500 6.500h5M19 6.500h5M33 6.500h5"/></g><g fill="#111"><rect x="4" y="5" width="3" height="3"/><rect x="18" y="5" width="3" height="3"/><rect x="32.500" y="5" width="3" height="3"/></g><path d="M4.500 10.500h6M18.500 10.500h6M32.500 10.500h6" stroke="#444" stroke-width="1"/></svg>
<!-- corner -->
<div class="pl" style="right:144px;top:179px">Corner:</div>
<div class="a" style="left:658px;top:177px;width:42px;height:14px;background:#e2e2e2;border:1px solid #c4c4c4"></div>
<div class="a" style="left:660px;top:178px;width:12px;height:12px;border:1px solid #666;border-radius:2px;background:#c8c8c8;box-shadow:inset 0 1px 1px #999"></div>
<div class="a" style="left:674px;top:179px;width:10px;height:10px;background:linear-gradient(#f4f4f4,#ccc);border:1px solid #aaa;border-radius:3px 0 0 0"></div>
<div class="a" style="left:688px;top:179px;width:10px;height:10px;background:linear-gradient(#f4f4f4,#ccc);border:1px solid #aaa"></div>
<svg class="a" style="left:658px;top:177px" width="42" height="14" viewBox="0 0 42 14"><g fill="none" stroke="#111" stroke-width="1.300"><path d="M5.500 11v-6h5.500M19.500 11v-6h5.500M33.500 11v-6h5.500"/></g><g fill="#111"><rect x="7.500" y="7" width="2.500" height="2.500"/><rect x="21.500" y="7" width="2.500" height="2.500"/><rect x="35.500" y="7" width="2.500" height="2.500"/></g></svg>
<div class="pl" style="right:71px;top:179px">Limit:</div>
<div class="dd" style="left:731px;top:177px;width:10px;height:14px;border-radius:2px"></div>
<div class="a" style="left:733.500px;top:179px;border-left:2.500px solid transparent;border-right:2.500px solid transparent;border-bottom:3px solid #4a5fb0"></div>
<div class="a" style="left:733.500px;top:186px;border-left:2.500px solid transparent;border-right:2.500px solid transparent;border-top:3px solid #4a5fb0"></div>
<div class="wf" style="left:740px;top:177px;width:19px;height:14px;border-color:#ccc"></div>
<div class="t" style="left:745px;top:179px;font-size:8px;line-height:10px;transform:scaleX(.9)">10</div>
<div class="t" style="left:760px;top:179px;font-size:8px;line-height:10px">x</div>
<!-- align stroke -->
<div class="pl" style="right:144px;top:197px">Align Stroke:</div>
<div class="a" style="left:658px;top:195px;width:42px;height:14px;background:#e2e2e2;border:1px solid #c4c4c4"></div>
<div class="a" style="left:660px;top:196px;width:12px;height:12px;border:1px solid #666;border-radius:2px;background:#c8c8c8;box-shadow:inset 0 1px 1px #999"></div>
<svg class="a" style="left:658px;top:195px" width="42" height="14" viewBox="0 0 42 14"><g fill="none"><rect x="4.500" y="3.500" width="7" height="7" stroke="#111" stroke-width="1.600"/><rect x="4.500" y="3.500" width="7" height="7" stroke="#ddd" stroke-width=".5"/><rect x="18.500" y="3.500" width="7" height="7" stroke="#888" stroke-width="1.200"/><rect x="32.500" y="3.500" width="7" height="7" stroke="#888" stroke-width="1.200"/></g><path d="M2.500 3.500h1M12.500 3.500h1M2.500 10.500h1M12.500 10.500h1M16.500 3.500h1M26.500 3.500h1M16.500 10.500h1M26.500 10.500h1M30.500 3.500h1M40.500 3.500h1M30.500 10.500h1M40.500 10.500h1" stroke="#555" stroke-width=".7"/></svg>
<div class="sep" style="left:612px;top:213px;width:152px"></div>
<!-- dashed -->
<div class="a" style="left:613px;top:219px;width:9px;height:9px;background:linear-gradient(135deg,#d8d8d8,#fafafa);border:1px solid #a8a8a8"></div>
<div class="t" style="left:624px;top:219px;font-size:8px;line-height:10px;transform:scaleX(.92)">Dashed Line</div>
<svg class="a" style="left:714px;top:218px" width="52" height="12" viewBox="714 218 52 12"><g fill="none" stroke="#5a5a5a" stroke-width="1.100"><path d="M715.500 224v-4h4M722 220h7M731.500 220h4v4M735.500 226.500v1.500h-4M729 228h-7M719.500 228h-4v-1.500"/><path d="M742.500 223v-3h3M748 220h3.500M754 220h3.500M760 220h3v3M763 225.500v2.500h-3M757.500 228h-3.500M751.500 228h-3.500M745.500 228h-3v-2.500"/></g></svg>
<div class="a" style="left:613px;top:234px;width:22px;height:13px;background:#dcdcdc;border:1px solid #c2c2c2;box-shadow:0 0 0 1px #e6e6e6"></div>
<div class="t dis" style="left:616px;top:248px;font-size:8px;line-height:10px;color:#b4b4b4;transform:scaleX(.9)">dash</div>
<div class="a" style="left:637.4px;top:234px;width:22px;height:13px;background:#dcdcdc;border:1px solid #c2c2c2;box-shadow:0 0 0 1px #e6e6e6"></div>
<div class="t dis" style="left:641.9px;top:248px;font-size:8px;line-height:10px;color:#b4b4b4;transform:scaleX(.9)">gap</div>
<div class="a" style="left:663.5px;top:234px;width:22px;height:13px;background:#dcdcdc;border:1px solid #c2c2c2;box-shadow:0 0 0 1px #e6e6e6"></div>
<div class="t dis" style="left:666.5px;top:248px;font-size:8px;line-height:10px;color:#b4b4b4;transform:scaleX(.9)">dash</div>
<div class="a" style="left:689.5px;top:234px;width:22px;height:13px;background:#dcdcdc;border:1px solid #c2c2c2;box-shadow:0 0 0 1px #e6e6e6"></div>
<div class="t dis" style="left:694.0px;top:248px;font-size:8px;line-height:10px;color:#b4b4b4;transform:scaleX(.9)">gap</div>
<div class="a" style="left:715px;top:234px;width:22px;height:13px;background:#dcdcdc;border:1px solid #c2c2c2;box-shadow:0 0 0 1px #e6e6e6"></div>
<div class="t dis" style="left:718px;top:248px;font-size:8px;line-height:10px;color:#b4b4b4;transform:scaleX(.9)">dash</div>
<div class="a" style="left:740px;top:234px;width:22px;height:13px;background:#dcdcdc;border:1px solid #c2c2c2;box-shadow:0 0 0 1px #e6e6e6"></div>
<div class="t dis" style="left:744.5px;top:248px;font-size:8px;line-height:10px;color:#b4b4b4;transform:scaleX(.9)">gap</div>
<div class="sep" style="left:612px;top:259px;width:152px"></div>
<!-- arrowheads -->
<div class="pl" style="right:144px;top:266.500px">Arrowheads:</div>
<div class="wf" style="left:658px;top:265px;width:32px;height:14px;border-color:#c8c8c8"></div>
<div class="a" style="left:662px;top:271.500px;width:18px;height:1.300px;background:#333"></div>
<div class="a" style="left:683px;top:266px;width:6px;height:12px;border:1px solid #666;border-radius:1.500px;background:linear-gradient(#f4f4f4,#d0d0d0)"></div><div class="ar" style="left:684px;top:271px;border-left-width:2px;border-right-width:2px"></div>
<div class="wf" style="left:700px;top:265px;width:32px;height:14px;border-color:#c8c8c8"></div>
<div class="a" style="left:704px;top:271.500px;width:18px;height:1.300px;background:#333"></div>
<div class="a" style="left:725px;top:266px;width:6px;height:12px;border:1px solid #666;border-radius:1.500px;background:linear-gradient(#f4f4f4,#d0d0d0)"></div><div class="ar" style="left:726px;top:271px;border-left-width:2px;border-right-width:2px"></div>
<svg class="a" style="left:752px;top:268px" width="12" height="9" viewBox="0 0 12 9"><path d="M1 2.500h7.500M10.500 2.500l-2.800-2v4zM10.500 6.500h-7.500M1 6.500l2.800-2v4z" stroke="#a4a4a4" stroke-width=".8" fill="#a4a4a4"/></svg>
<!-- scale -->
<div class="pl dis" style="right:144px;top:285.500px">Scale:</div>
<div class="a" style="left:658px;top:284px;width:32px;height:14px;background:#dcdcdc;border:1px solid #c0c0c0;box-shadow:0 0 0 1px #e8e8e8"></div>
<div class="t" style="left:662px;top:285.500px;font-size:8px;line-height:10px;color:#8a8a8a;transform:scaleX(.9)">100</div>
<div class="a" style="left:680px;top:285px;width:1px;height:12px;background:#c4c4c4"></div><div class="arr" style="left:684px;top:288.500px;border-left-color:#8a8a8a"></div>
<div class="t dis" style="left:691px;top:285.500px;font-size:8px;line-height:10px;transform:scaleX(.85)">%</div>
<div class="a" style="left:700px;top:284px;width:32px;height:14px;background:#dcdcdc;border:1px solid #c0c0c0;box-shadow:0 0 0 1px #e8e8e8"></div>
<div class="t" style="left:704px;top:285.500px;font-size:8px;line-height:10px;color:#8a8a8a;transform:scaleX(.9)">100</div>
<div class="a" style="left:722px;top:285px;width:1px;height:12px;background:#c4c4c4"></div><div class="arr" style="left:726px;top:288.500px;border-left-color:#8a8a8a"></div>
<div class="t dis" style="left:733px;top:285.500px;font-size:8px;line-height:10px;transform:scaleX(.85)">%</div>
<svg class="a" style="left:754px;top:285px" width="7" height="12" viewBox="0 0 7 12"><rect x="1.500" y="1" width="3.500" height="5.500" rx="1.700" fill="none" stroke="#a0a0a0" stroke-width="1"/><rect x="1.500" y="5.500" width="3.500" height="5.500" rx="1.700" fill="none" stroke="#a0a0a0" stroke-width="1"/></svg>
<!-- align -->
<div class="pl dis" style="right:144px;top:304.500px">Align:</div>
<div class="a" style="left:658px;top:303px;width:33px;height:13px;background:#dadada;border:1px solid #c0c0c0;box-shadow:0 0 0 1px #e6e6e6"></div>
<svg class="a" style="left:658px;top:303px" width="33" height="13" viewBox="0 0 33 13"><g stroke="#9a9a9a" stroke-width="1.100" fill="none"><path d="M3 7.500h9M9 4.500l3.500 3-3.500 3M3 3h7M19 7.500h10M25 4.500l3.500 3-3.500 3M19 3h10"/></g></svg>
<div class="sep" style="left:612px;top:320px;width:152px"></div>
<!-- profile -->
<div class="pl" style="right:144px;top:326.500px">Profile:</div>
<div class="wf" style="left:658px;top:325px;width:72px;height:14px;border-color:#c8c8c8"></div>
<div class="a" style="left:662px;top:331px;width:25px;height:1.600px;background:#111"></div>
<div class="t" style="left:692px;top:326.500px;font-size:8px;line-height:10px;transform:scaleX(.92)">Uniform</div>
<div class="a" style="left:722px;top:326px;width:7px;height:12px;border:1px solid #666;border-radius:1.500px;background:linear-gradient(#f4f4f4,#d0d0d0)"></div><div class="ar" style="left:723.500px;top:331px;border-left-width:2px;border-right-width:2px"></div>
<svg class="a" style="left:735px;top:325px" width="28" height="14" viewBox="0 0 28 14"><g fill="none" stroke="#b0b0b0" stroke-width=".8"><path d="M2 4v7l3.500-3.500zM10 4v7l-3.500-3.500zM6 2.500v10"/><path d="M19.500 2.500h6l-3 3.500zM19.500 12h6l-3-3.500zM18 7.200h9"/></g></svg>
<!-- PATHFINDER panel -->
<div class="a" style="left:568px;top:381px;width:163px;height:87px;background:#d6d6d6;border:1px solid #5a5a5a;border-radius:2px 2px 0 0;box-shadow:1px 1px 2px rgba(0,0,0,.2)"></div>
<div class="hdr" style="left:569px;top:382px;width:161px;height:9px;background:linear-gradient(#555,#3c3c3c)"></div>
<div class="arl" style="left:710.500px;top:384px;border-right-color:#ddd;border-top-width:2px;border-bottom-width:2px;border-right-width:2.500px"></div><div class="arl" style="left:713.500px;top:384px;border-right-color:#ddd;border-top-width:2px;border-bottom-width:2px;border-right-width:2.500px"></div>
<div class="a" style="left:719px;top:383px;width:1px;height:7px;background:#777"></div>
<svg class="a" style="left:722px;top:383px" width="7" height="7" viewBox="0 0 7 7"><path d="M1 1l4.500 4.500M5.500 1L1 5.500" stroke="#e8e8e8" stroke-width="1.300"/></svg>
<div class="a" style="left:569px;top:391px;width:161px;height:13px;background:linear-gradient(#8e8e8e,#7c7c7c)">
 <div class="tab" style="left:0;width:49px;overflow:hidden"><span style="left:5px">TRANSFORM</span></div>
 <div class="tab" style="left:49px;width:27px"><span style="left:5px">ALIGN</span></div>
 <div class="tab on" style="left:76px;width:55px"><span style="left:4.500px">PATHFINDER</span></div>
</div>
<div class="ar" style="left:716.500px;top:396.500px;border-left-width:1.800px;border-right-width:1.800px;border-top-width:2.500px;border-top-color:#333"></div>
<div class="a" style="left:721px;top:395px;width:5px;height:5px;background:repeating-linear-gradient(180deg,#555 0 1px,transparent 1px 2px)"></div>
<div class="t" style="left:574px;top:405.500px;font-size:8px;line-height:10px;transform:scaleX(.95)">Shape Modes:</div>
<div class="t" style="left:574px;top:434px;font-size:8px;line-height:10px;transform:scaleX(.95)">Pathfinders:</div>
<div class="a" style="left:670.500px;top:419px;width:42px;height:13px;border:1px solid #bdbdbd;border-radius:2px;background:linear-gradient(#f6f6f6,#e6e6e6);box-shadow:0 0 0 1px #e2e2e2"></div>
<div class="t" style="left:679px;top:420.500px;font-size:8px;line-height:10px;color:#a6a6a6;transform:scaleX(.95)">Expand</div>
<svg class="a" style="left:569px;top:415px" width="161" height="48" viewBox="569 415 161 48">
<defs><linearGradient id="pg" x1="0" x2="1" y1="0" y2="1"><stop offset="0" stop-color="#fff"/><stop offset="1" stop-color="#bbb"/></linearGradient>
<linearGradient id="pd" x1="0" x2="1" y1="0" y2="1"><stop offset="0" stop-color="#888"/><stop offset="1" stop-color="#222"/></linearGradient></defs>
<g stroke="#444" stroke-width=".8">
<!-- unite -->
<path d="M578.500 419.500h6v3h3v6.500h-6.500v-3h-2.500z" fill="url(#pg)"/><path d="M581 422.500h3.500v3.500" fill="none" stroke="#999"/>
<!-- minus front -->
<path d="M603 419.500h6.500v2.500h-4v4h-2.500z" fill="url(#pg)"/><rect x="605.500" y="422" width="6.500" height="7" fill="#e4e4e4" stroke="#aaa"/>
<!-- intersect -->
<rect x="627" y="419.500" width="6.500" height="6.500" fill="#e4e4e4" stroke="#666"/><rect x="630" y="422.500" width="6.500" height="6.500" fill="#e4e4e4" stroke="#666"/><rect x="630" y="422.500" width="3.500" height="3.500" fill="#222"/>
<!-- exclude -->
<rect x="651" y="419.500" width="6.500" height="6.500" fill="url(#pd)"/><rect x="654" y="422.500" width="6.500" height="6.500" fill="url(#pd)"/><rect x="654" y="422.500" width="3.500" height="3.500" fill="#eee"/>
</g>
<g stroke="#333" stroke-width=".8">
<!-- divide -->
<circle cx="585.500" cy="455" r="3.300" fill="#ddd"/><rect x="579" y="447.500" width="6.500" height="6.500" fill="url(#pg)"/><path d="M582.500 447.500v6.500M579 451h6.500" stroke="#333"/>
<!-- trim -->
<circle cx="610" cy="455" r="3.300" fill="#aaa"/><rect x="603.500" y="447.500" width="6.500" height="6.500" fill="url(#pg)"/><path d="M606.500 447.500v3h3.500" fill="none"/>
<!-- merge -->
<circle cx="634" cy="455" r="3.300" fill="#999"/><rect x="627.500" y="447.500" width="6.500" height="6.500" fill="url(#pg)"/>
<!-- crop -->
<circle cx="658" cy="455" r="3.300" fill="#ddd"/><rect x="651.500" y="447.500" width="6.500" height="6.500" fill="url(#pg)"/><path d="M655 454v-3h3v3z" fill="#333"/>
<!-- outline -->
<circle cx="682.500" cy="455" r="3.300" fill="#eee"/><rect x="676" y="447.500" width="6.500" height="6.500" fill="#f4f4f4"/><path d="M676 454l6.500-6.500" />
<!-- minus back -->
<path d="M699 447.500h7v3q-3.500 0-3.500 3.500h-3.500z" fill="#fff" stroke="#333"/>
</g>
</svg>

<!-- bottom frame -->
<div class="a" style="left:3px;top:519px;width:794px;height:1px;background:#f4f4f4"></div>
<div class="a" style="left:3px;top:520px;width:795px;height:1px;background:#5a5a5a"></div>
<div class="a" style="left:797px;top:26px;width:1px;height:494px;background:#f0f0f0"></div>
</body></html>
